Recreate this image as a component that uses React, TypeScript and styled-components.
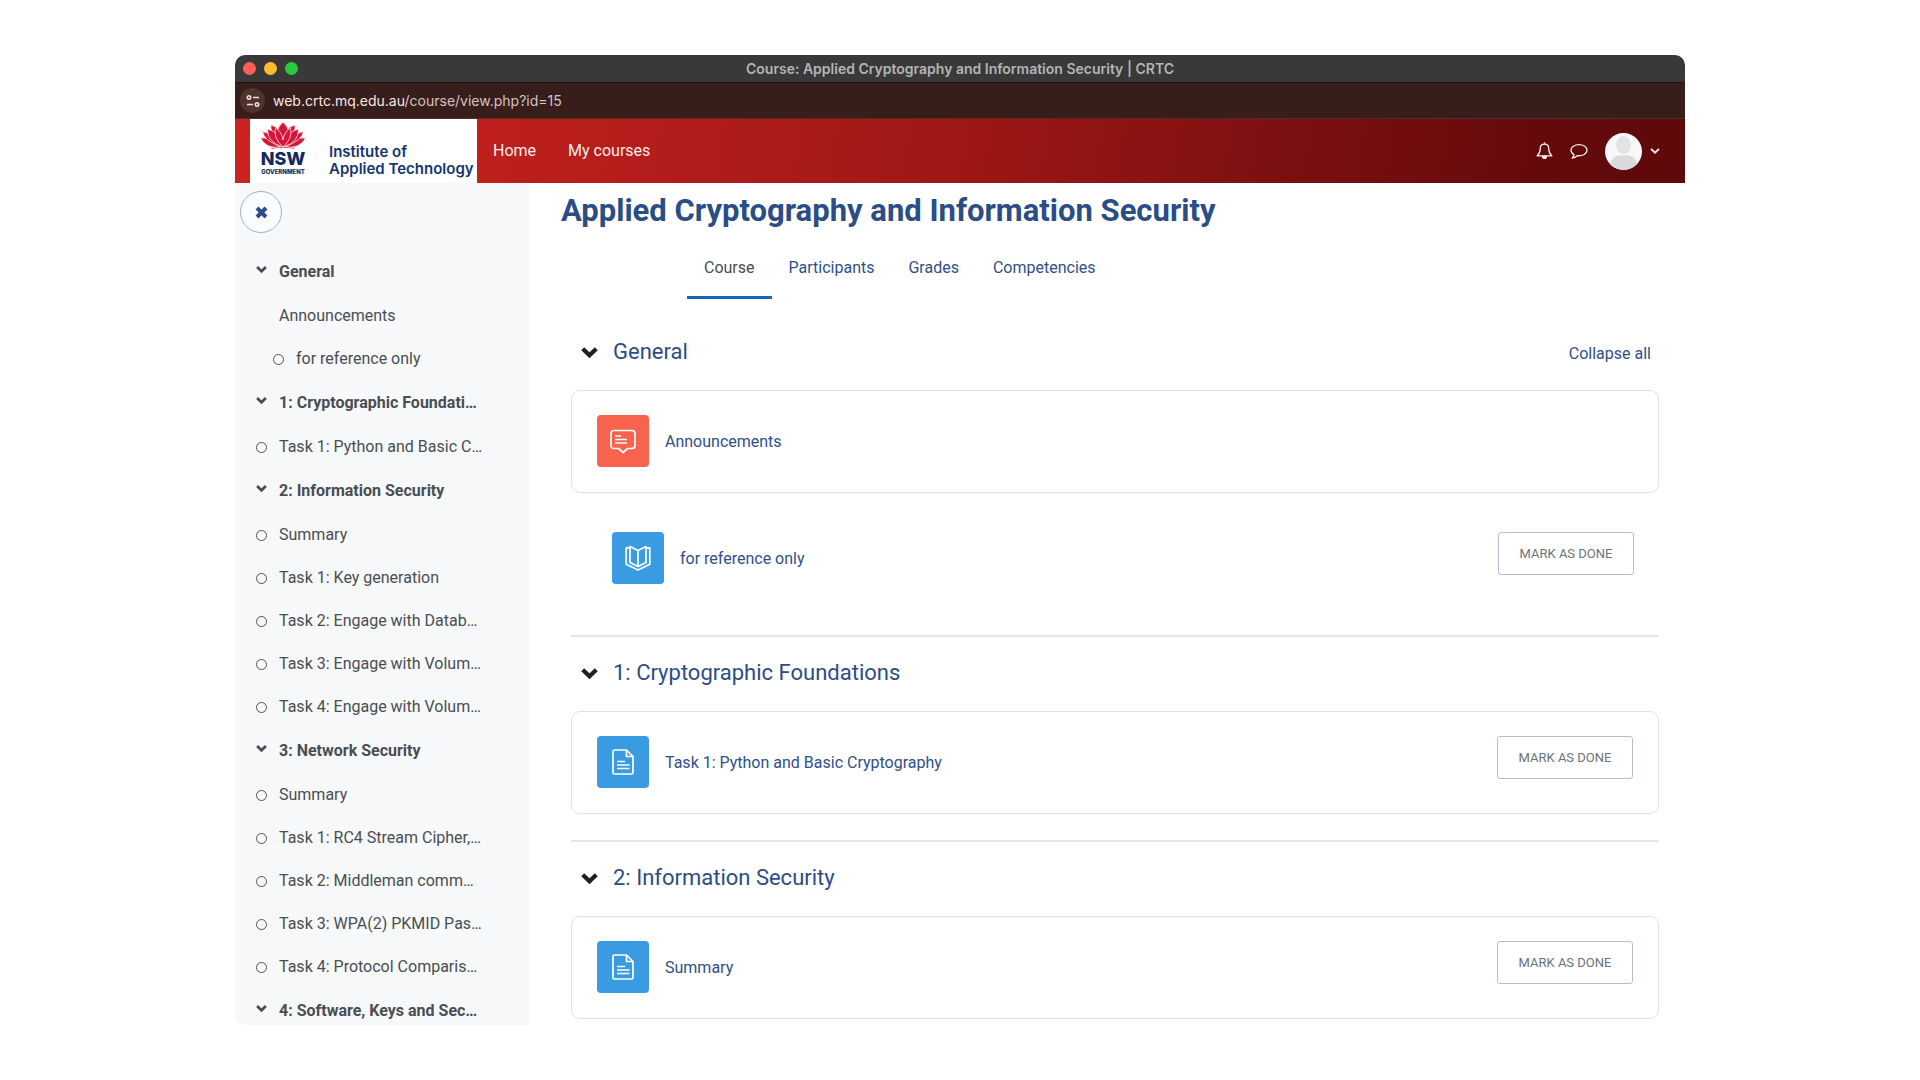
import React from "react";
import styled, { createGlobalStyle } from "styled-components";

const GlobalStyle = createGlobalStyle`
  *, *::before, *::after { box-sizing: border-box; }
  body {
    margin: 0;
    background: #ffffff;
    font-family: Roboto, "Liberation Sans", sans-serif;
    font-size: 16px;
    line-height: 24px;
    color: #4a4e52;
  }
  a { color: inherit; text-decoration: none; }
  button { font: inherit; color: inherit; background: none; border: 0; padding: 0; cursor: pointer; }
  ul { list-style: none; margin: 0; padding: 0; }
  svg { display: block; flex: none; }
`;

const Desktop = styled.div`
  min-height: 100vh;
  padding: 55px 32px;
`;

const Window = styled.div`
  display: flex;
  flex-direction: column;
  max-width: 1450px;
  height: calc(100vh - 110px);
  margin: 0 auto;
  border-radius: 10px;
  overflow: hidden;
`;

const TitleBar = styled.div`
  display: grid;
  grid-template-columns: 1fr auto 1fr;
  align-items: center;
  flex: none;
  height: 28px;
  padding: 0 8px;
  background: #383938;
  border-bottom: 1px solid #1d1413;
  color: #b4b4b4;
  font: 600 14px/20px Inter, sans-serif;
`;

const Lights = styled.div`
  display: flex;
  gap: 8px;
`;

const Light = styled.button<{ $color: string }>`
  width: 13px;
  height: 13px;
  border-radius: 50%;
  && { background: ${(p) => p.$color}; }
`;

const AddressBar = styled.div`
  display: flex;
  align-items: center;
  gap: 8px;
  flex: none;
  height: 36px;
  padding: 0 5px;
  background: #381e1a;
  border-bottom: 1px solid #542b29;
  color: #d3c3c1;
  font: 400 14px/24px Inter, sans-serif;
`;

const SiteButton = styled.button`
  display: grid;
  place-items: center;
  width: 25px;
  height: 25px;
  border-radius: 50%;
  && { background: #50332f; }
`;

const Host = styled.span`
  color: #f6e7e4;
`;

const NavBar = styled.header`
  display: flex;
  align-items: center;
  flex: none;
  height: 64px;
  padding: 0 25px 0 15px;
  background: linear-gradient(100deg, #cb2420 0%, #b81e1c 24%, #a01816 48%, #7d1011 72%, #640a0c 90%, #5e090b 100%);
  color: #fbeceb;
`;

const Brand = styled.a`
  display: flex;
  gap: 23px;
  width: 227px;
  height: 100%;
  padding: 3px 0 0 10px;
  background: #ffffff;
  color: #14356f;
`;

const Crest = styled.div`
  display: flex;
  flex-direction: column;
  align-items: center;
  width: 46px;
`;

const CrestName = styled.span`
  font: 800 18px/18px Inter, sans-serif;
  color: #14295c;
`;

const CrestSub = styled.span`
  font: 800 6px/8px Inter, sans-serif;
  color: #14295c;
`;

const BrandName = styled.span`
  padding-top: 21px;
  white-space: nowrap;
  font: 600 15px/17px Inter, sans-serif;
`;

const NavLinks = styled.nav`
  display: flex;
  gap: 32px;
  margin-left: 16px;
  flex: 1;
`;

const NavTools = styled.div`
  display: flex;
  align-items: center;
  gap: 17px;
`;

const UserMenu = styled.button`
  display: flex;
  align-items: center;
  gap: 8px;
`;

const Body = styled.div`
  display: flex;
  flex: 1;
  min-height: 0;
`;

const Drawer = styled.aside`
  flex: none;
  width: 294px;
  padding: 8px 5px;
  background: #f7f8f9;
  overflow: hidden;
`;

const CloseButton = styled.button`
  display: grid;
  place-items: center;
  width: 42px;
  height: 42px;
  border-radius: 50%;
  && { border: 1px solid #a3afcc; background: #fbfcfd; }
`;

const Index = styled.nav`
  padding: 16px 0 0 16px;
`;

const IndexHeading = styled.div`
  display: flex;
  align-items: center;
  gap: 12px;
  height: 45px;
  font-weight: 700;

  svg { margin-bottom: 4px; }
`;

const IndexItem = styled.li<{ $indent?: number }>`
  display: flex;
  align-items: center;
  gap: 12px;
  height: 43px;
  padding-left: ${(p) => p.$indent ?? 0}px;
  white-space: nowrap;
`;

const Ring = styled.span`
  flex: none;
  width: 11px;
  height: 11px;
  margin-top: 2px;
  border: 1px solid #4f5357;
  border-radius: 50%;
`;

const Main = styled.main`
  flex: 1;
  min-width: 0;
  padding: 8px 26px 0 32px;
  overflow: hidden;
  color: #2f4f8a;
`;

const Title = styled.h1`
  margin: 0;
  font-size: 31px;
  line-height: 40px;
  font-weight: 700;
  color: #2b4d85;
`;

const Tabs = styled.nav`
  display: flex;
  margin: 12px 0 0 126px;
`;

const Tab = styled.a<{ $active?: boolean }>`
  height: 56px;
  padding: 13px 17px 0;
  border-bottom: 3px solid ${(p) => (p.$active ? "#1267b8" : "transparent")};
  color: ${(p) => (p.$active ? "#4a4e52" : "inherit")};
`;

const Sections = styled.div`
  padding: 17px 0 0 10px;
`;

const Section = styled.section`
  & + & {
    margin-top: 26px;
    border-top: 2px solid #e3e5e7;
  }
`;

const SectionHead = styled.div`
  display: flex;
  align-items: center;
  gap: 15px;
  height: 74px;
  padding: 0 8px 2px 10px;
`;

const SectionTitle = styled.h2`
  flex: 1;
  margin: 0;
  font-size: 22px;
  line-height: 28px;
  font-weight: 400;
  color: #2b4d85;
`;

const CollapseLink = styled.a`
  padding-top: 3px;
`;

const Activity = styled.div<{ $plain?: boolean }>`
  display: flex;
  align-items: flex-start;
  gap: 16px;
  height: ${(p) => (p.$plain ? 116 : 103)}px;
  padding: ${(p) => (p.$plain ? "39px 25px 0 41px" : "24px 25px 0")};
  border: ${(p) => (p.$plain ? "0" : "1px solid #dfe2e5")};
  border-radius: 9px;
`;

const IconTile = styled.span<{ $color: string }>`
  display: grid;
  place-items: center;
  flex: none;
  width: 52px;
  height: 52px;
  border-radius: 4px;
  background: ${(p) => p.$color};
`;

const ActivityLink = styled.a`
  flex: 1;
  line-height: 54px;
`;

const DoneButton = styled.button`
  width: 136px;
  height: 43px;
  border-radius: 3px;
  && {
    border: 1px solid #b4bcd6;
    font-size: 13px;
    color: #6d7276;
  }
`;

const Chevron = ({ size, color = "currentColor", weight = 3 }: { size: number; color?: string; weight?: number }) => (
  <svg width={size} height={size} viewBox="0 0 16 16" fill="none" stroke={color} strokeWidth={weight}>
    <path d="M1.6 4.500 8 10.700 14.400 4.500" />
  </svg>
);

const Waratah = () => (
  <svg width="46" height="28" viewBox="0 0 46 28" fill="#d7153a" stroke="#ffffff" strokeWidth="0.7">
    <path d="M11 25.6Q23 22.6 35 25.6Q36 27 34 27Q23 25 12 27Q10 27 11 25.6Z" />
    <path d="M20 25Q6 27 .5 16Q8 15 14 19Z" />
    <path d="M26 25Q40 27 45.500 16Q38 15 32 19Z" />
    <path d="M19 24Q4 18 2.500 9.500Q10 11 15 17Z" />
    <path d="M27 24Q42 18 43.500 9.500Q36 11 31 17Z" />
    <path d="M16 15Q10 9 11 3Q16 4 20 9Z" />
    <path d="M30 15Q36 9 35 3Q30 4 26 9Z" />
    <path d="M17 11Q18 4 23 0Q28 4 29 11L23 19Z" />
    <path d="M22.500 25Q7 20 7.500 7Q20 10 22.800 25Z" />
    <path d="M23.500 25Q39 20 38.500 7Q26 10 23.200 25Z" />
    <path d="M23 25Q13 16 15.500 6Q22 10 23 18Q24 10 30.500 6Q33 16 23 25Z" />
  </svg>
);

const TuneIcon = () => (
  <svg width="14" height="14" viewBox="0 0 14 14" fill="none" stroke="#f3dfdc" strokeWidth="1.6">
    <circle cx="3" cy="3.500" r="1.700" />
    <path d="M7 3.500h6M1 10.500h6" />
    <circle cx="11" cy="10.500" r="1.700" />
  </svg>
);

const BellIcon = () => (
  <svg width="17" height="18" viewBox="0 0 17 18" fill="none" stroke="currentColor" strokeWidth="1.300" strokeLinejoin="round">
    <path d="M8.500 2.200C5.500 2.200 4.200 4.300 4.200 7C4.200 10.500 3 12.200 1.200 13.800H15.800C14 12.200 12.800 10.500 12.800 7C12.800 4.300 11.500 2.200 8.500 2.200Z" />
    <path d="M8.500 .6V2.200" />
    <path d="M6.600 14.200a1.900 2.200 0 0 0 3.800 0Z" fill="currentColor" />
  </svg>
);

const ChatIcon = () => (
  <svg width="18" height="18" viewBox="0 0 18 18" fill="none" stroke="currentColor" strokeWidth="1.300" strokeLinejoin="round">
    <path d="M9 2.600C4.600 2.600 1 5 1 8.200C1 10 2.200 11.600 4 12.600C3.800 14 3.200 15 2.200 16C4.400 15.800 6 15 7.200 13.700C13 14.200 17 11.700 17 8.200C17 5 13.400 2.600 9 2.600Z" />
  </svg>
);

const Avatar = () => (
  <svg width="37" height="37" viewBox="0 0 37 37">
    <defs>
      <clipPath id="avatar-clip"><circle cx="18.500" cy="18.500" r="18.500" /></clipPath>
    </defs>
    <g clipPath="url(#avatar-clip)">
      <rect width="37" height="37" fill="#f8f8f8" />
      <path d="M5 37V31Q6 24 14 22.500H23Q31 24 32 31V37Z" fill="#d9dadb" />
      <ellipse cx="18.500" cy="12" rx="7.500" ry="9" fill="#e2e3e4" />
    </g>
  </svg>
);

const CrossIcon = () => (
  <svg width="13" height="13" viewBox="0 0 13 13" stroke="#2b4d85" strokeWidth="4">
    <path d="M2 2l9 9M11 2l-9 9" />
  </svg>
);

const ForumIcon = () => (
  <svg width="26" height="26" viewBox="0 0 26 26" fill="none" stroke="#ffffff" strokeWidth="1.700" strokeLinejoin="round">
    <path d="M4 2.500H22Q25 2.500 25 5.500V17.500Q25 20.500 22 20.500H17.500L13 24.500L8.500 20.500H4Q1 20.500 1 17.500V5.500Q1 2.500 4 2.500Z" />
    <path d="M5 8h6M5 11.500h12M5 15h12" />
  </svg>
);

const BookIcon = () => (
  <svg width="26" height="26" viewBox="0 0 26 26" fill="none" stroke="#ffffff" strokeWidth="1.700" strokeLinejoin="round">
    <path d="M13 5.500L5 1.500V17.500L13 21.500L21 17.500V1.500Z" />
    <path d="M13 5.500V21.500M5 2.800H1.200V19.200L13 25L24.800 19.200V2.800H21" />
  </svg>
);

const PageIcon = () => (
  <svg width="22" height="26" viewBox="0 0 22 26" fill="none" stroke="#ffffff" strokeWidth="1.700" strokeLinejoin="round">
    <path d="M1 2.500Q1 1 2.500 1H14.500L21 7.500V23.500Q21 25 19.500 25H2.500Q1 25 1 23.500Z" />
    <path d="M14.500 1V7.500H21M5 12.500h8M5 16h12.500M5 19.500h12.500" />
  </svg>
);

type IndexEntry = { label: string; indent?: number; noRing?: boolean };

const courseIndex: { heading: string; items: IndexEntry[] }[] = [
  {
    heading: "General",
    items: [
      { label: "Announcements", indent: 23, noRing: true },
      { label: "for reference only", indent: 17 },
    ],
  },
  { heading: "1: Cryptographic Foundati…", items: [{ label: "Task 1: Python and Basic C…" }] },
  {
    heading: "2: Information Security",
    items: [
      { label: "Summary" },
      { label: "Task 1: Key generation" },
      { label: "Task 2: Engage with Datab…" },
      { label: "Task 3: Engage with Volum…" },
      { label: "Task 4: Engage with Volum…" },
    ],
  },
  {
    heading: "3: Network Security",
    items: [
      { label: "Summary" },
      { label: "Task 1: RC4 Stream Cipher,…" },
      { label: "Task 2: Middleman comm…" },
      { label: "Task 3: WPA(2) PKMID Pas…" },
      { label: "Task 4: Protocol Comparis…" },
    ],
  },
  { heading: "4: Software, Keys and Sec…", items: [] },
];

type ActivityEntry = { label: string; kind: "forum" | "book" | "page"; done?: boolean; plain?: boolean };

const sections: { title: string; activities: ActivityEntry[] }[] = [
  {
    title: "General",
    activities: [
      { label: "Announcements", kind: "forum" },
      { label: "for reference only", kind: "book", done: true, plain: true },
    ],
  },
  { title: "1: Cryptographic Foundations", activities: [{ label: "Task 1: Python and Basic Cryptography", kind: "page", done: true }] },
  { title: "2: Information Security", activities: [{ label: "Summary", kind: "page", done: true }] },
];

const kinds = {
  forum: { color: "#f7634d", Icon: ForumIcon },
  book: { color: "#399be2", Icon: BookIcon },
  page: { color: "#399be2", Icon: PageIcon },
};

const ActivityRow = ({ label, kind, done, plain }: ActivityEntry) => {
  const { color, Icon } = kinds[kind];
  return (
    <Activity $plain={plain}>
      <IconTile $color={color}><Icon /></IconTile>
      <ActivityLink href="#">{label}</ActivityLink>
      {done && <DoneButton>MARK AS DONE</DoneButton>}
    </Activity>
  );
};

export default function App() {
  return (
    <>
      <GlobalStyle />
      <Desktop>
        <Window>
          <TitleBar>
            <Lights>
              <Light $color="#fd5f57" aria-label="Close window" />
              <Light $color="#fdbc2e" aria-label="Minimise window" />
              <Light $color="#28c840" aria-label="Zoom window" />
            </Lights>
            <span>Course: Applied Cryptography and Information Security | CRTC</span>
          </TitleBar>
          <AddressBar>
            <SiteButton aria-label="Site information"><TuneIcon /></SiteButton>
            <span><Host>web.crtc.mq.edu.au</Host>/course/view.php?id=15</span>
          </AddressBar>
          <NavBar>
            <Brand href="#">
              <Crest>
                <Waratah />
                <CrestName>NSW</CrestName>
                <CrestSub>GOVERNMENT</CrestSub>
              </Crest>
              <BrandName>Institute of<br />Applied Technology</BrandName>
            </Brand>
            <NavLinks>
              <a href="#">Home</a>
              <a href="#">My courses</a>
            </NavLinks>
            <NavTools>
              <button aria-label="Notifications"><BellIcon /></button>
              <button aria-label="Messages"><ChatIcon /></button>
              <UserMenu aria-label="User menu">
                <Avatar />
                <Chevron size={10} />
              </UserMenu>
            </NavTools>
          </NavBar>
          <Body>
            <Drawer>
              <CloseButton aria-label="Close course index"><CrossIcon /></CloseButton>
              <Index>
                {courseIndex.map((group) => (
                  <React.Fragment key={group.heading}>
                    <IndexHeading>
                      <Chevron size={11} weight={4} />
                      <a href="#">{group.heading}</a>
                    </IndexHeading>
                    <ul>
                      {group.items.map((item) => (
                        <IndexItem key={item.label} $indent={item.indent}>
                          {!item.noRing && <Ring />}
                          <a href="#">{item.label}</a>
                        </IndexItem>
                      ))}
                    </ul>
                  </React.Fragment>
                ))}
              </Index>
            </Drawer>
            <Main>
              <Title>Applied Cryptography and Information Security</Title>
              <Tabs>
                <Tab href="#" $active>Course</Tab>
                <Tab href="#">Participants</Tab>
                <Tab href="#">Grades</Tab>
                <Tab href="#">Competencies</Tab>
              </Tabs>
              <Sections>
                {sections.map((section, i) => (
                  <Section key={section.title}>
                    <SectionHead>
                      <button aria-label={`Collapse ${section.title}`}><Chevron size={17} color="#1d2125" weight={4} /></button>
                      <SectionTitle>{section.title}</SectionTitle>
                      {i === 0 && <CollapseLink href="#">Collapse all</CollapseLink>}
                    </SectionHead>
                    {section.activities.map((activity) => (
                      <ActivityRow key={activity.label} {...activity} />
                    ))}
                  </Section>
                ))}
              </Sections>
            </Main>
          </Body>
        </Window>
      </Desktop>
    </>
  );
}
